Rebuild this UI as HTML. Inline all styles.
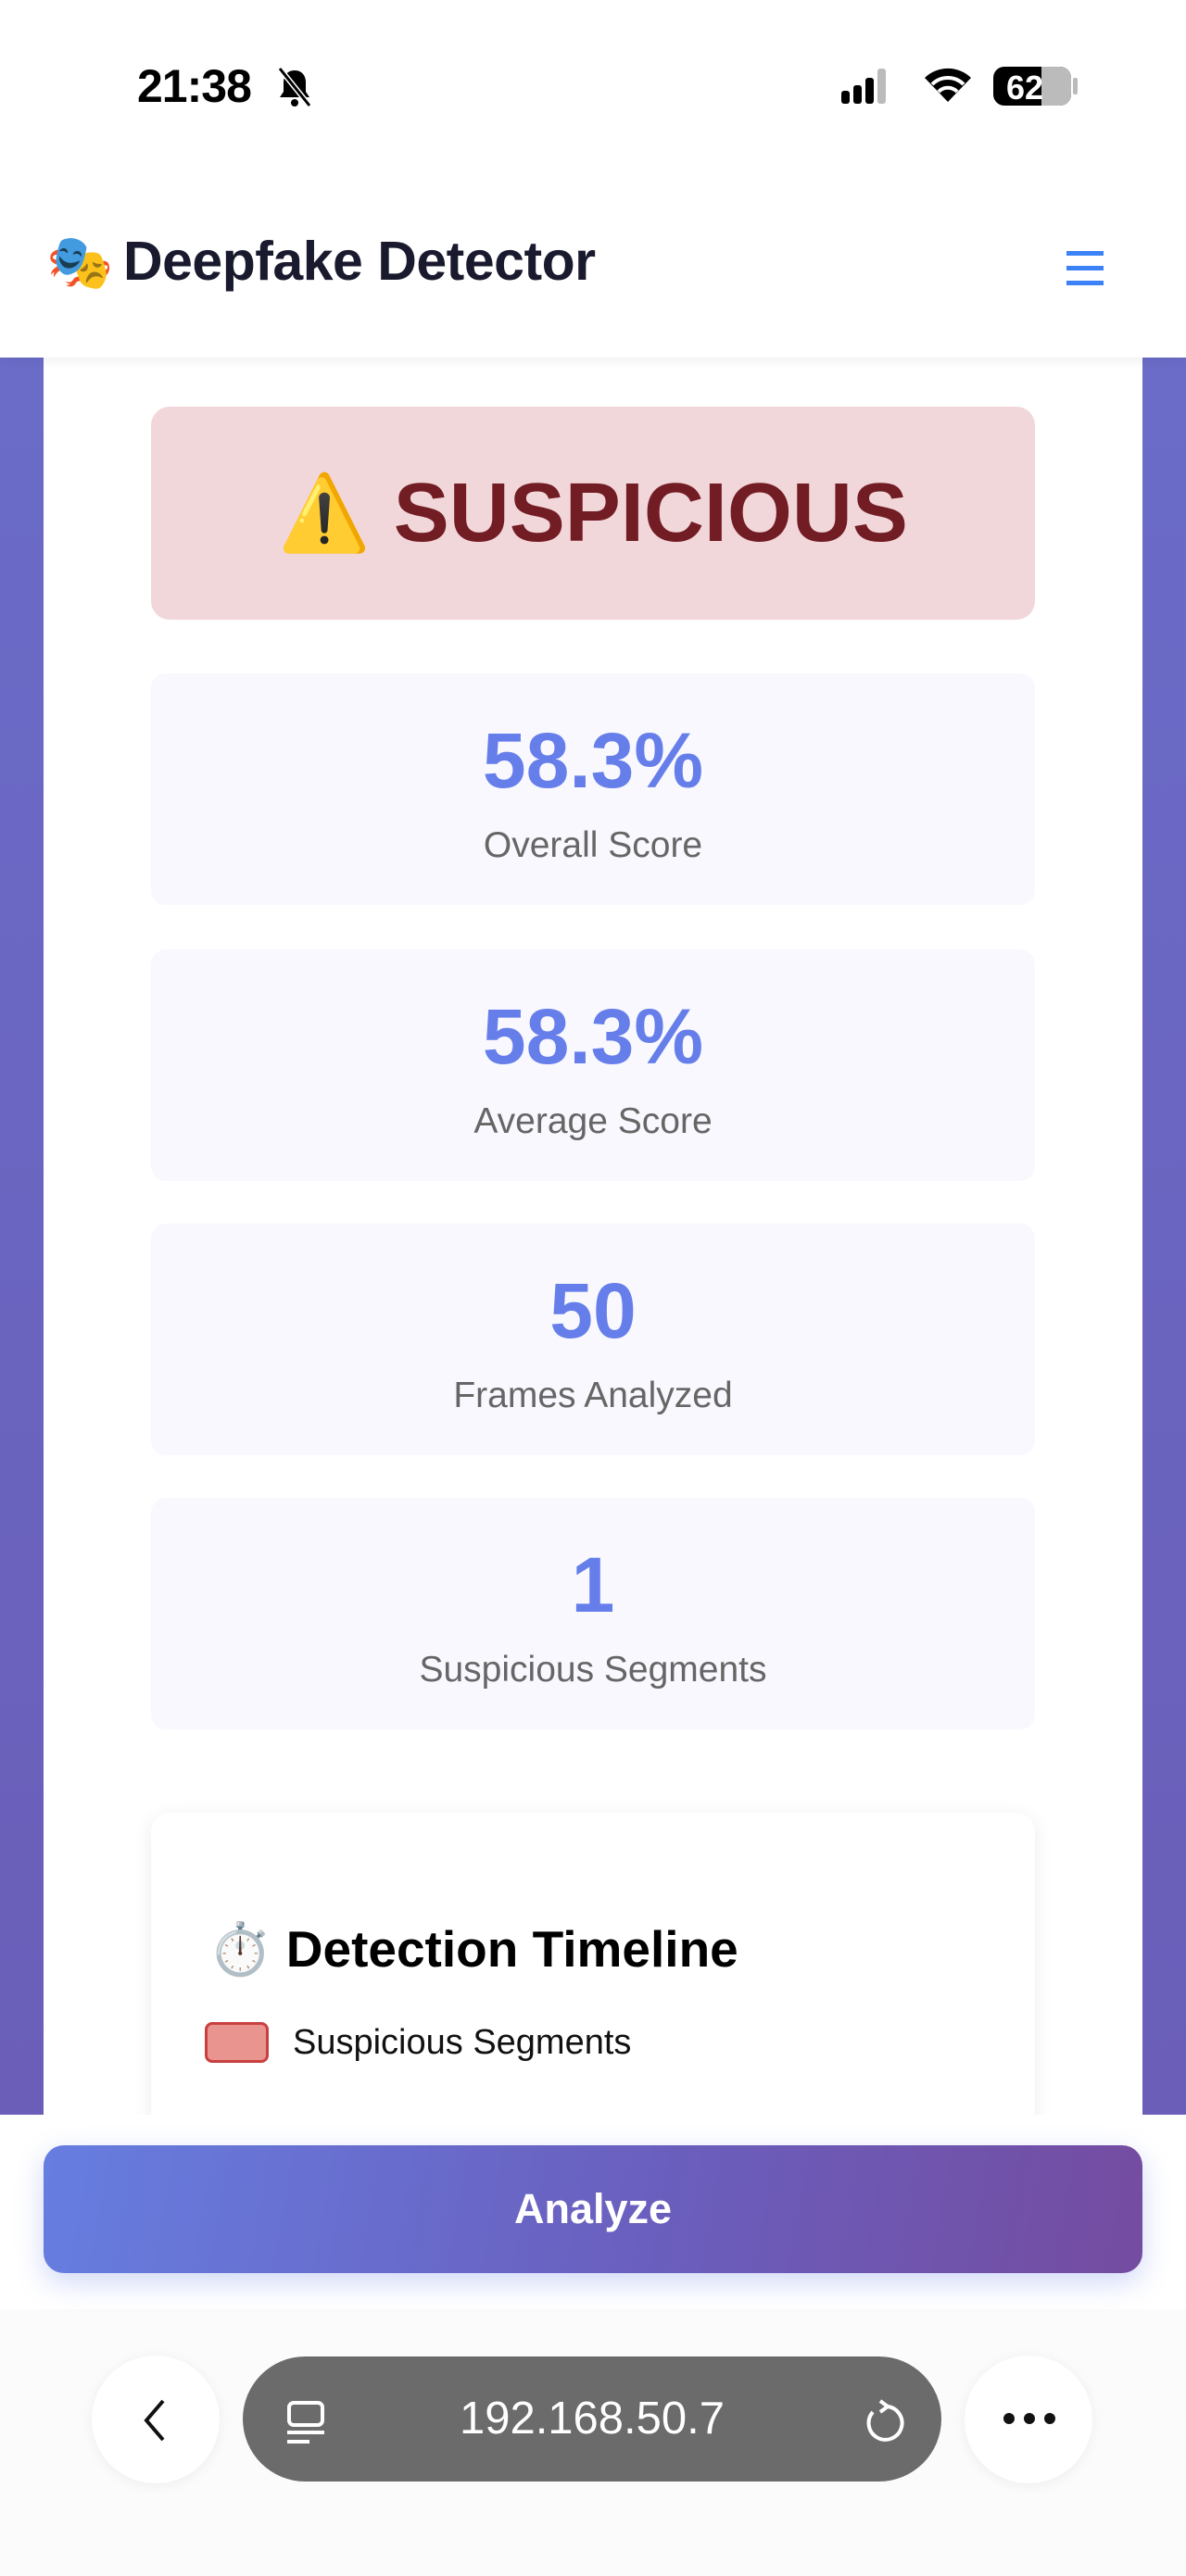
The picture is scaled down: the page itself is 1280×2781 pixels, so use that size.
<!DOCTYPE html>
<html><head><meta charset="utf-8"><style>
*{margin:0;padding:0;box-sizing:border-box}
body{width:1280px;height:2781px;position:relative;background:#fff;font-family:"Liberation Sans",sans-serif;overflow:hidden}
.abs{position:absolute}
.purple{left:0;top:386px;width:1280px;height:1897px;background:linear-gradient(180deg,#6a6cc8,#6a5eb8)}
.main{left:47px;top:386px;width:1186px;height:1897px;background:#fff}
.card{left:163px;width:954px;height:250px;background:#f8f8fe;border-radius:16px;text-align:center;color:#667eea}
.card .n{font-weight:bold;font-size:84px;margin-top:46px;line-height:96px}
.card .l{font-size:39px;color:#666;margin-top:22px}
</style></head><body>
<div class="abs" style="left:0;top:0;width:1280px;height:386px;background:#fff;box-shadow:0 4px 10px rgba(0,0,0,.06);z-index:2"></div>
<div class="abs" style="left:148px;top:64px;font-size:50px;font-weight:bold;z-index:3;letter-spacing:-1px">21:38</div>
<svg class="abs" style="left:296px;top:70px;z-index:3" width="44" height="48" viewBox="0 0 44 48"><path d="M22 6c-8 0-12 6-12 13v10l-4 6h32l-4-6V19c0-7-4-13-12-13z" fill="#000"/><circle cx="22" cy="41" r="4"/><path d="M6 4l32 40" stroke="#fff" stroke-width="6"/><path d="M6 4l32 40" stroke="#000" stroke-width="3"/></svg>
<svg class="abs" style="left:906px;top:70px;z-index:3" width="70" height="44"><g fill="#000"><rect x="2" y="28" width="9" height="14" rx="3"/><rect x="15" y="22" width="9" height="20" rx="3"/><rect x="28" y="14" width="9" height="28" rx="3"/></g><rect x="41" y="4" width="9" height="38" rx="3" fill="#bbb"/></svg>
<svg class="abs" style="left:994px;top:70px;z-index:3" width="58" height="44" viewBox="0 0 58 44"><path d="M29 40L4 14a36 36 0 0 1 50 0z" fill="#000"/><path d="M12 21a24 24 0 0 1 34 0" stroke="#fff" stroke-width="4" fill="none"/><path d="M19 29a14 14 0 0 1 20 0" stroke="#fff" stroke-width="4" fill="none"/></svg>
<div class="abs" style="left:1072px;top:72px;width:84px;height:42px;border-radius:12px;background:#000;overflow:hidden;z-index:3"><div style="position:absolute;right:0;top:0;width:32px;height:42px;background:#bbb"></div><div style="position:absolute;left:14px;top:2px;color:#fff;font-weight:bold;font-size:36px">62</div></div>
<div class="abs" style="left:1158px;top:84px;width:5px;height:18px;background:#bbb;border-radius:2px;z-index:3"></div>
<div class="abs" style="left:50px;top:250px;font-size:58px;z-index:3">🎭</div>
<div class="abs" style="left:133px;top:248px;font-size:59px;font-weight:bold;color:#1a1a2e;z-index:3;letter-spacing:-0.5px">Deepfake Detector</div>
<div class="abs" style="left:1151px;top:271px;width:40px;z-index:3"><div style="height:5px;background:#3b82f6;margin-bottom:11px"></div><div style="height:5px;background:#3b82f6;margin-bottom:11px"></div><div style="height:5px;background:#3b82f6"></div></div>
<div class="abs purple"></div>
<div class="abs main"></div>
<div class="abs" style="left:163px;top:439px;width:954px;height:230px;background:#f2d7da;border-radius:20px;text-align:center;line-height:230px;color:#721c24;font-weight:bold;font-size:90px"><span style="font-size:80px;vertical-align:top">⚠️</span> SUSPICIOUS</div>
<div class="abs card" style="top:727px"><div class="n">58.3%</div><div class="l">Overall Score</div></div>
<div class="abs card" style="top:1025px"><div class="n">58.3%</div><div class="l">Average Score</div></div>
<div class="abs card" style="top:1321px"><div class="n">50</div><div class="l">Frames Analyzed</div></div>
<div class="abs card" style="top:1617px"><div class="n">1</div><div class="l">Suspicious Segments</div></div>
<div class="abs" style="left:163px;top:1957px;width:954px;height:400px;background:#fff;border-radius:20px;box-shadow:0 4px 20px rgba(0,0,0,.08)"></div>
<div class="abs" style="left:225px;top:2072px;font-size:55px;font-weight:bold;color:#000">⏱️ Detection Timeline</div>
<div class="abs" style="left:221px;top:2183px;width:69px;height:44px;background:#ea9490;border:3px solid #c94040;border-radius:8px"></div>
<div class="abs" style="left:316px;top:2184px;font-size:38px;color:#111">Suspicious Segments</div>
<div class="abs" style="left:0;top:2283px;width:1280px;height:498px;background:#fbfbfb"></div>
<div class="abs" style="left:0;top:2283px;width:1280px;height:210px;background:#fff"></div>
<div class="abs" style="left:47px;top:2316px;width:1186px;height:138px;border-radius:22px;background:linear-gradient(100deg,#667ee0,#6a5fbe 55%,#744ca0);box-shadow:0 10px 30px rgba(102,126,234,.3);color:#fff;font-weight:bold;font-size:45px;text-align:center;line-height:138px">Analyze</div>
<div class="abs" style="left:99px;top:2543px;width:138px;height:138px;border-radius:50%;background:#fff;box-shadow:0 2px 14px rgba(0,0,0,.06)"></div>
<svg class="abs" style="left:148px;top:2588px" width="40" height="50"><path d="M28 4L10 25l18 21" stroke="#111" stroke-width="4" fill="none"/></svg>
<div class="abs" style="left:262px;top:2544px;width:754px;height:135px;border-radius:68px;background:#6b6b6b;color:#fff;font-size:49px;text-align:center;line-height:135px">192.168.50.7</div>
<svg class="abs" style="left:306px;top:2590px" width="48" height="50"><rect x="6" y="4" width="36" height="24" rx="5" stroke="#fff" stroke-width="4" fill="none"/><path d="M4 36h40M4 46h24" stroke="#fff" stroke-width="4"/></svg>
<svg class="abs" style="left:928px;top:2588px" width="50" height="54"><path d="M30 10A18 18 0 1 1 14 16" stroke="#fff" stroke-width="4" fill="none"/><path d="M22 4l8 6-8 6" stroke="#fff" stroke-width="4" fill="none"/></svg>
<div class="abs" style="left:1041px;top:2543px;width:138px;height:138px;border-radius:50%;background:#fff;box-shadow:0 2px 14px rgba(0,0,0,.06)"></div>
<div class="abs" style="left:1081px;top:2605px;width:60px;height:12px"><span style="position:absolute;left:2px;width:12px;height:12px;border-radius:50%;background:#111"></span><span style="position:absolute;left:24px;width:12px;height:12px;border-radius:50%;background:#111"></span><span style="position:absolute;left:46px;width:12px;height:12px;border-radius:50%;background:#111"></span></div>
</body></html>
